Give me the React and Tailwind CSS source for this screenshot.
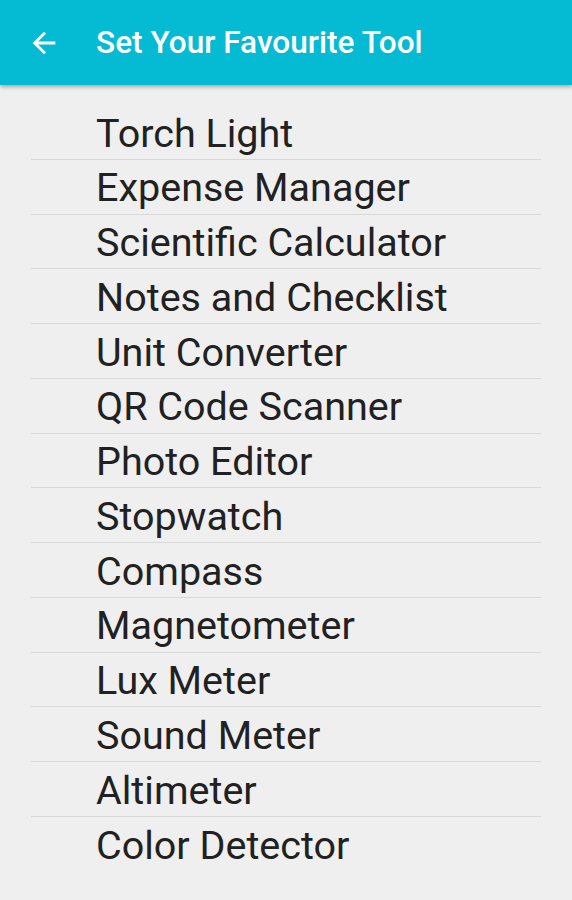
import React from 'react';

const tools = [
  'Torch Light',
  'Expense Manager',
  'Scientific Calculator',
  'Notes and Checklist',
  'Unit Converter',
  'QR Code Scanner',
  'Photo Editor',
  'Stopwatch',
  'Compass',
  'Magnetometer',
  'Lux Meter',
  'Sound Meter',
  'Altimeter',
  'Color Detector',
];

const App = () => {
  return (
    <div className="min-h-[900px] w-[572px] bg-[#efefef] font-['Roboto',sans-serif]">
      <header className="relative z-10 flex h-[85px] items-center bg-[#05bbd3] shadow-[0_2px_4px_rgba(0,0,0,0.3)]">
        <button className="ml-[27px] flex h-[34px] w-[34px] items-center justify-center text-white">
          <svg width="34" height="34" viewBox="0 0 24 24" fill="white">
            <path d="M20 11H7.83l5.59-5.59L12 4l-8 8 8 8 1.41-1.41L7.83 13H20v-2z" />
          </svg>
        </button>
        <h1 className="ml-[35px] text-[31.6px] font-medium leading-none text-white">Set Your Favourite Tool</h1>
      </header>

      <ul className="px-[31px] pt-[20px]">
        {tools.map((tool, i) => (
          <li
            key={tool}
            className={`flex h-[54.75px] items-center pl-[65px] pt-[3px] text-[39.5px] leading-none text-[#212121] ${
              i < tools.length - 1 ? 'border-b border-[#d8d8d8]' : ''
            }`}
          >
            {tool}
          </li>
        ))}
      </ul>
    </div>
  );
};

export default App;
